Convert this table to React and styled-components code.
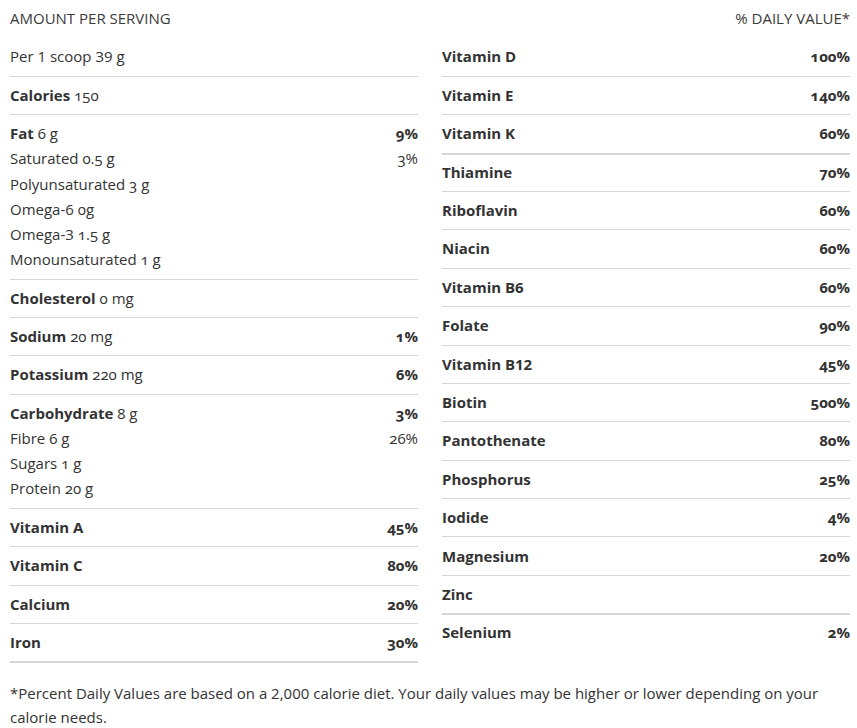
import React from "react";
import styled, { createGlobalStyle } from "styled-components";

const GlobalStyle = createGlobalStyle`
  html, body { margin: 0; padding: 0; background: #ffffff; }
  body {
    font-family: "Open Sans", "Noto Sans", sans-serif;
    color: #333333;
    -webkit-font-smoothing: antialiased;
  }
`;

const Wrapper = styled.div`
  padding: 0 7px 0 10px;
  width: 857px;
  box-sizing: border-box;
`;

const Grid = styled.div`
  display: grid;
  grid-template-columns: 1fr 1fr;
  column-gap: 24px;
`;

const Column = styled.div`
  display: flex;
  flex-direction: column;
`;

const Header = styled.div`
  padding: 6.1px 0;
  line-height: 25.2px;
  font-size: 15px;
  font-weight: 400;
  text-transform: uppercase;
  color: #3a3a3a;
  text-align: ${(p) => (p.$right ? "right" : "left")};
  border-bottom: 1px solid transparent;
`;

const Group = styled.div`
  padding: 6.1px 0;
  border-bottom: ${(p) =>
    p.$border === "none"
      ? "1px solid transparent"
      : p.$border === "thick"
      ? "2px solid #d6d6d6"
      : "1px solid #d6d6d6"};
  margin-bottom: ${(p) => (p.$border === "thick" ? "-1px" : "0")};
`;

const Line = styled.div`
  display: flex;
  justify-content: space-between;
  align-items: baseline;
  line-height: 25.2px;
  font-size: 15px;
`;

const Label = styled.span`
  font-weight: ${(p) => (p.$bold ? 700 : 400)};
  color: #333333;
`;

const Amount = styled.span`
  font-weight: 400;
  font-variant-numeric: oldstyle-nums;
`;

const Percent = styled.span`
  font-weight: ${(p) => (p.$bold ? 700 : 400)};
  font-variant-numeric: oldstyle-nums;
`;

const Footnote = styled.p`
  margin: 19px 0 0;
  font-size: 15px;
  line-height: 24px;
  color: #333333;
`;

const left = [
  { lines: [{ label: "Per 1 scoop 39 g", plain: true }] },
  { lines: [{ label: "Calories", amount: "150" }] },
  {
    lines: [
      { label: "Fat", amount: "6 g", pct: "9%" },
      { label: "Saturated", amount: "0.5 g", pct: "3%", sub: true },
      { label: "Polyunsaturated", amount: "3 g", sub: true },
      { label: "Omega-6", amount: "0g", sub: true },
      { label: "Omega-3", amount: "1.5 g", sub: true },
      { label: "Monounsaturated", amount: "1 g", sub: true },
    ],
  },
  { lines: [{ label: "Cholesterol", amount: "0 mg" }] },
  { lines: [{ label: "Sodium", amount: "20 mg", pct: "1%" }] },
  { lines: [{ label: "Potassium", amount: "220 mg", pct: "6%" }] },
  {
    lines: [
      { label: "Carbohydrate", amount: "8 g", pct: "3%" },
      { label: "Fibre", amount: "6 g", pct: "26%", sub: true },
      { label: "Sugars", amount: "1 g", sub: true },
      { label: "Protein", amount: "20 g", sub: true },
    ],
  },
  { lines: [{ label: "Vitamin A", pct: "45%" }] },
  { lines: [{ label: "Vitamin C", pct: "80%" }] },
  { lines: [{ label: "Calcium", pct: "20%" }] },
  { lines: [{ label: "Iron", pct: "30%" }], border: "thick" },
];

const right = [
  ["Vitamin D", "100%"],
  ["Vitamin E", "140%"],
  ["Vitamin K", "60%", "thick"],
  ["Thiamine", "70%"],
  ["Riboflavin", "60%"],
  ["Niacin", "60%"],
  ["Vitamin B6", "60%"],
  ["Folate", "90%"],
  ["Vitamin B12", "45%"],
  ["Biotin", "500%"],
  ["Pantothenate", "80%"],
  ["Phosphorus", "25%"],
  ["Iodide", "4%"],
  ["Magnesium", "20%"],
  ["Zinc", "", "thick"],
  ["Selenium", "2%", "none"],
];

function Row({ line }) {
  if (line.plain) {
    return (
      <Line>
        <Label>{line.label}</Label>
      </Line>
    );
  }
  const bold = !line.sub;
  return (
    <Line>
      <span>
        <Label $bold={bold}>{line.label}</Label>
        {line.amount ? <Amount> {line.amount}</Amount> : null}
      </span>
      {line.pct ? <Percent $bold={bold}>{line.pct}</Percent> : null}
    </Line>
  );
}

export default function App() {
  return (
    <>
      <GlobalStyle />
      <Wrapper>
        <Grid>
          <Column>
            <Header>Amount per serving</Header>
            {left.map((g, i) => (
              <Group key={i} $border={g.border}>
                {g.lines.map((l, j) => (
                  <Row key={j} line={l} />
                ))}
              </Group>
            ))}
          </Column>
          <Column>
            <Header $right>% Daily Value*</Header>
            {right.map(([label, pct, border]) => (
              <Group key={label} $border={border}>
                <Row line={{ label, pct }} />
              </Group>
            ))}
          </Column>
        </Grid>
        <Footnote>
          *Percent Daily Values are based on a 2,000 calorie diet. Your daily
          values may be higher or lower depending on your calorie needs.
        </Footnote>
      </Wrapper>
    </>
  );
}
